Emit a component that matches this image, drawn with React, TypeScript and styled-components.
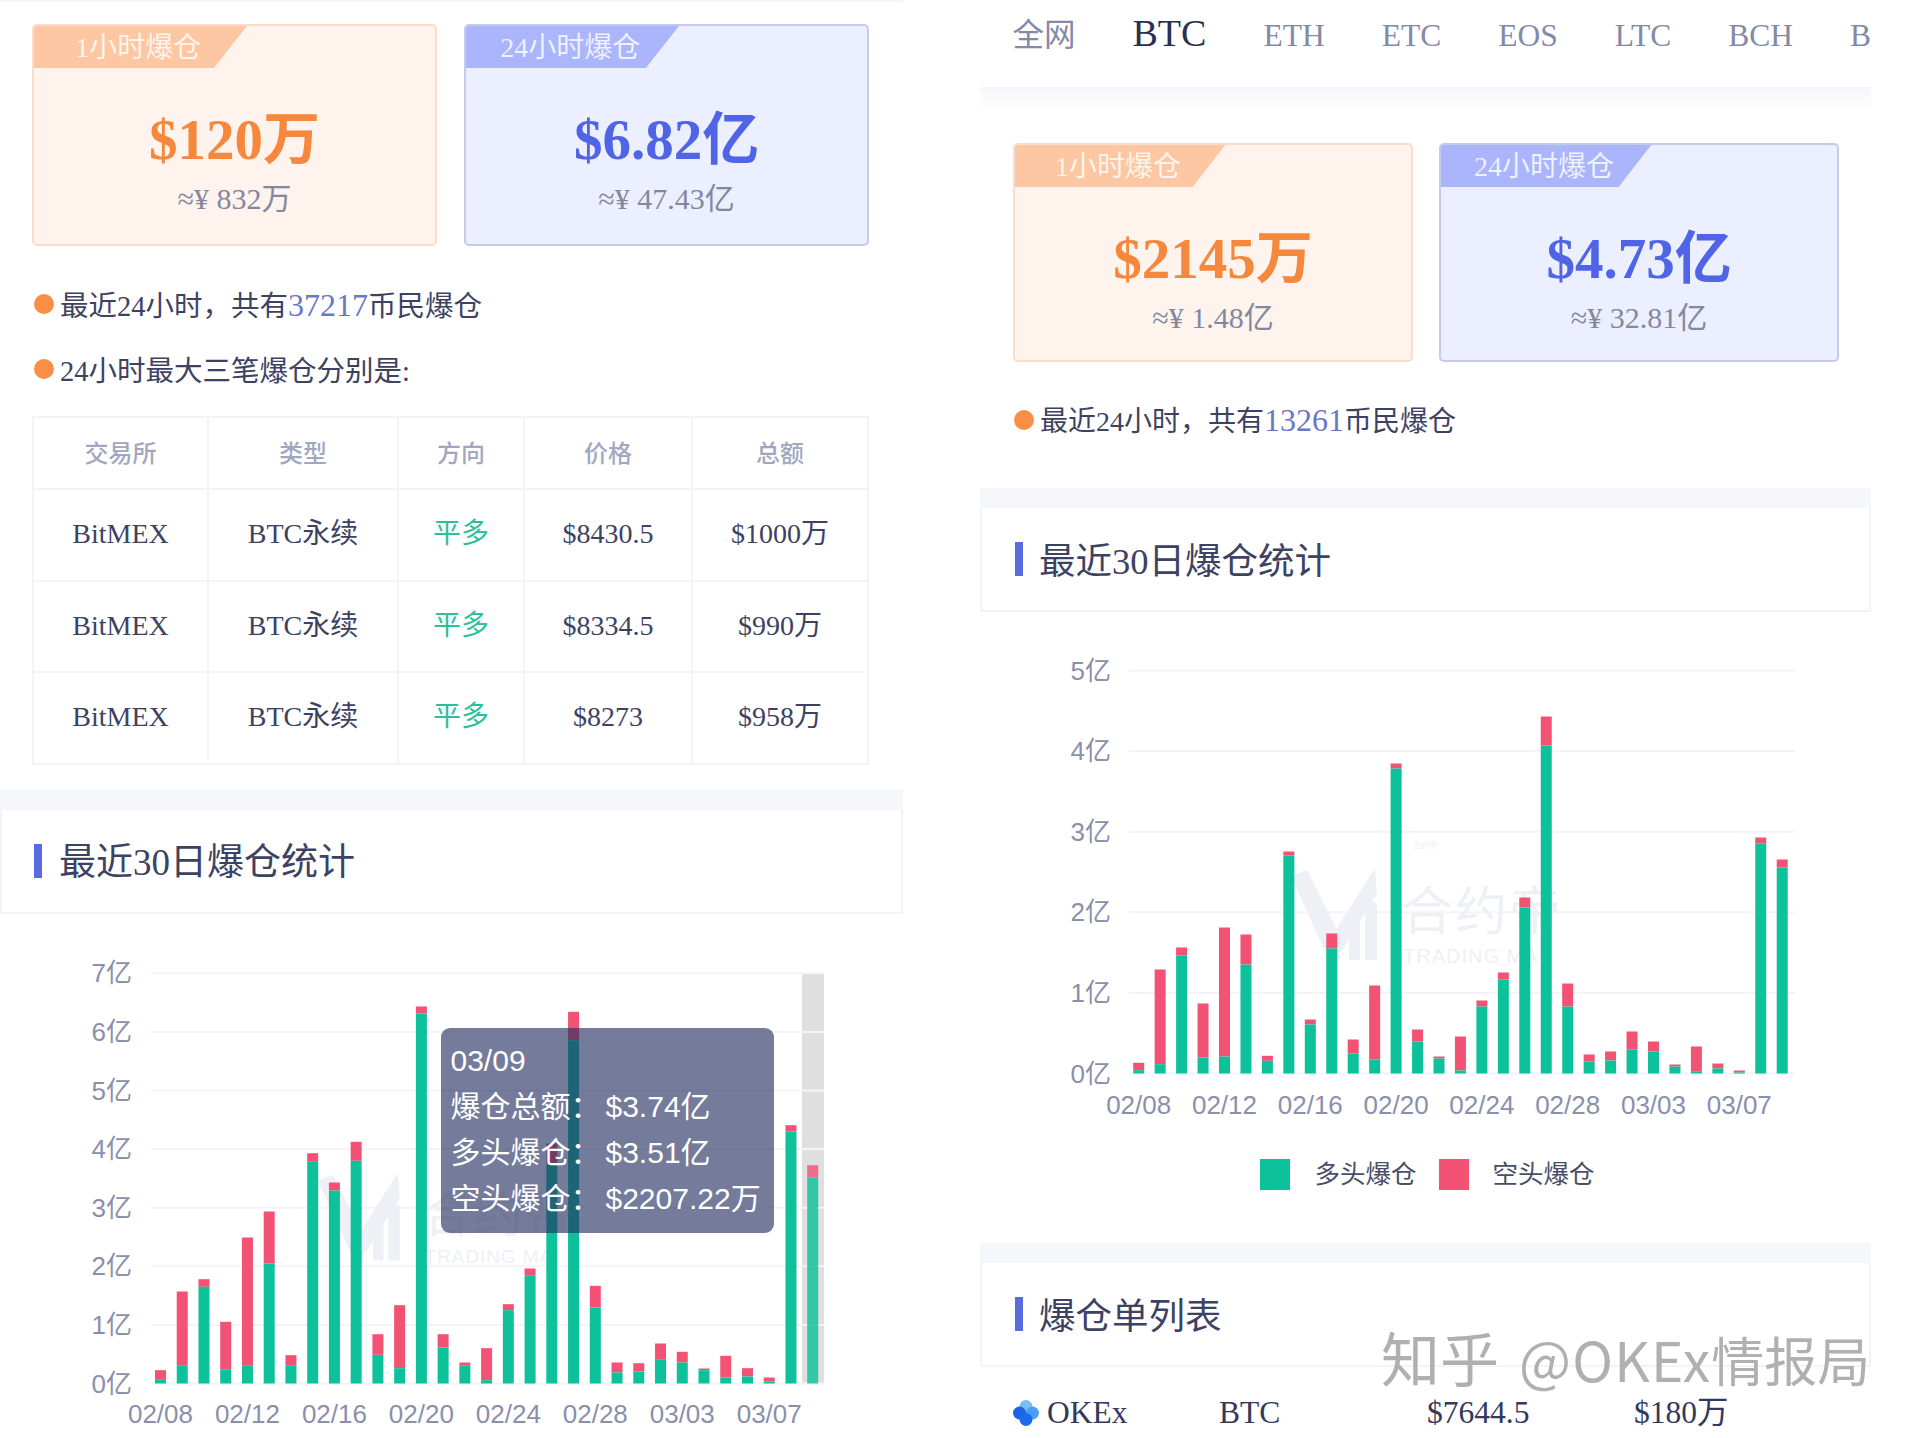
import React from "react";
import styled, { createGlobalStyle } from "styled-components";

const SERIF = `"Liberation Serif", "Noto Sans CJK SC", serif`;
const SANS = `"Liberation Sans", "Noto Sans CJK SC", sans-serif`;

const Global = createGlobalStyle`
  html, body { margin: 0; padding: 0; background: #fff; width: 1920px; height: 1438px; overflow: hidden; }
  * { box-sizing: border-box; }
`;

const Page = styled.div`
  position: relative;
  display: flex;
  width: 1920px;
  height: 1438px;
  overflow: hidden;
  background: #fff;
  font-family: ${SERIF};
  color: #3d4263;
`;
const LeftColumn = styled.div`
  width: 903px;
  flex: none;
`;
const RightColumn = styled.div`
  width: 891px;
  margin-left: 77px;
  flex: none;
`;
const TopStrip = styled.div`
  height: 2px;
  background: #f5f6fa;
`;
const Tabs = styled.nav`
  display: flex;
  align-items: center;
  gap: 57px;
  height: 87px;
  padding: 0 0 16px 32.5px;
  white-space: nowrap;
`;
const Tab = styled.span<{ $active?: boolean }>`
  flex: none;
  font-size: ${(p) => (p.$active ? "38px" : "31.5px")};
  line-height: 44px;
  color: ${(p) => (p.$active ? "#2a3050" : "#8389a9")};
  ${(p) => (p.$active ? "margin-top: -5px;" : "")}
`;
const FadeBar = styled.div`
  height: 23px;
  background: linear-gradient(#f5f6fa, #ffffff);
`;
const CardRow = styled.div<{ $top: number; $left: number; $gap: number }>`
  display: flex;
  gap: ${(p) => p.$gap}px;
  margin-top: ${(p) => p.$top}px;
  padding-left: ${(p) => p.$left}px;
`;
const Card = styled.div<{ $tone: "orange" | "blue"; $w: number; $h: number }>`
  position: relative;
  width: ${(p) => p.$w}px;
  height: ${(p) => p.$h}px;
  padding-top: 82px;
  text-align: center;
  border-radius: 5px;
  border: 2px solid ${(p) => (p.$tone === "orange" ? "#fadccb" : "#c5caeb")};
  background: ${(p) => (p.$tone === "orange" ? "#fef3ed" : "#ecefff")};
  overflow: hidden;
`;
const CardTag = styled.div<{ $tone: "orange" | "blue" }>`
  position: absolute;
  left: -2px;
  top: -2px;
  width: 54%;
  height: 44px;
  padding: 3px 4px 0 0;
  line-height: 41px;
  font-size: 28px;
  text-align: center;
  color: rgba(255, 255, 255, 0.82);
  background: ${(p) => (p.$tone === "orange" ? "#fdc7a4" : "#abb5fc")};
  clip-path: polygon(0 0, 100% 0, 84% 100%, 0 100%);
`;
const CardValue = styled.div<{ $tone: "orange" | "blue" }>`
  font-size: 57px;
  line-height: 64px;
  font-weight: 700;
  color: ${(p) => (p.$tone === "orange" ? "#f5883c" : "#5065e5")};
`;
const CardSub = styled.div`
  margin-top: 9px;
  font-size: 30px;
  line-height: 36px;
  color: #83889f;
`;
const BulletLine = styled.div<{ $top: number; $size: number }>`
  display: flex;
  align-items: center;
  gap: 6px;
  height: 40px;
  margin-top: ${(p) => p.$top}px;
  padding-left: 34px;
  font-size: ${(p) => p.$size}px;
  color: #3d4263;
`;
const BulletText = styled.span`
  margin-bottom: 2px;
`;
const Dot = styled.span`
  width: 20px;
  height: 20px;
  border-radius: 50%;
  background: #f98f47;
  flex: none;
`;
const Count = styled.span`
  font-size: 32px;
  color: #6a76c8;
`;
const DataTable = styled.table`
  width: 835px;
  margin: 27px 0 0 32px;
  border-collapse: collapse;
  table-layout: fixed;
`;
const HeadCell = styled.th`
  height: 72px;
  padding: 0 0 4px;
  border: 2px solid #f3f4f8;
  font-size: 24px;
  font-weight: 500;
  font-family: ${SANS};
  color: #a2a7c1;
  text-align: center;
`;
const BodyCell = styled.td<{ $green?: boolean }>`
  height: 91.5px;
  padding: 26px 0 0;
  vertical-align: baseline;
  border: 2px solid #f3f4f8;
  font-size: 28px;
  line-height: 36px;
  text-align: center;
  color: ${(p) => (p.$green ? "#2bbf9b" : "#3d4263")};
`;
const Band = styled.div<{ $top: number; $h: number }>`
  height: ${(p) => p.$h}px;
  margin-top: ${(p) => p.$top}px;
  background: #f6f7fb;
`;
const SectionHeader = styled.div<{ $left: number; $gap: number }>`
  display: flex;
  align-items: center;
  gap: ${(p) => p.$gap}px;
  height: 104px;
  padding-left: ${(p) => p.$left}px;
  border: solid #f2f3f7;
  border-width: 0 2px 2px 2px;
`;
const AccentBar = styled.span`
  width: 8px;
  height: 34px;
  background: #5a6ae0;
  flex: none;
`;
const SectionTitle = styled.h2<{ $size: number }>`
  margin: 0;
  padding-top: 5px;
  font-size: ${(p) => p.$size}px;
  line-height: 44px;
  font-weight: 400;
  color: #3d4263;
`;
const ChartBox = styled.div<{ $h: number }>`
  position: relative;
  height: ${(p) => p.$h}px;
`;
const ChartSvg = styled.svg`
  display: block;
  width: 100%;
  height: 100%;
`;
const AxisText = styled.text`
  font-family: ${SANS};
  font-size: 26px;
  fill: #8a8fac;
  dominant-baseline: central;
`;
const MarkText = styled.text<{ $size: number }>`
  font-family: ${SANS};
  font-size: ${(p) => p.$size}px;
  fill: #eef0f6;
  dominant-baseline: central;
`;
const Tooltip = styled.div`
  position: absolute;
  left: 440.5px;
  top: 114.5px;
  width: 333px;
  height: 205px;
  padding: 9.5px 10px;
  border-radius: 9px;
  background: rgba(39, 48, 97, 0.64);
  font-family: ${SANS};
  font-size: 30px;
  line-height: 46px;
  color: #fff;
  white-space: nowrap;
`;
const TipRow = styled.div`
  display: flex;
`;
const TipLabel = styled.span`
  width: 155px;
  flex: none;
`;
const Legend = styled.div`
  display: flex;
  justify-content: center;
  gap: 22px;
  padding-left: 4px;
`;
const LegendItem = styled.div`
  display: flex;
  align-items: center;
  gap: 24px;
  font-family: ${SANS};
  font-size: 25.5px;
  line-height: 31px;
  color: #4a4e68;
`;
const LegendSwatch = styled.span<{ $color: string }>`
  width: 30px;
  height: 31px;
  background: ${(p) => p.$color};
`;
const ListRow = styled.div`
  display: grid;
  grid-template-columns: 206px 208px 207px 1fr;
  align-items: baseline;
  height: 94px;
  padding: 26px 0 0 33px;
  font-size: 31.5px;
  line-height: 40px;
  color: #33395c;
`;
const Exchange = styled.span`
  display: flex;
  align-items: baseline;
  gap: 8px;
`;
const OkexGlyph = styled.svg`
  align-self: center;
  flex: none;
`;
const ZhihuMark = styled.div`
  position: absolute;
  left: 1381px;
  top: 1320px;
  font-family: "Noto Sans CJK SC", "Noto Sans", sans-serif;
  font-size: 59px;
  line-height: 74px;
  white-space: nowrap;
  color: #b0b0b0;
  text-shadow: 1px 1px 1px rgba(255, 255, 255, 0.9);
`;
const ZhihuHandle = styled.span`
  font-size: 55px;
  letter-spacing: 1.2px;
  margin-left: 20px;
`;
const ZhihuBureau = styled.span`
  font-size: 53px;
  letter-spacing: 0;
`;

type Bar = [number, number];

const leftBars: Bar[] = [
  [13.3, 4.3], [92, 18.3], [104.3, 96.7], [61.7, 14.3], [146, 17.7], [172, 120], [28.3, 18.3], [230.3, 221.7],
  [201, 193], [241.7, 222.7], [49.3, 28.7], [78.3, 15.3], [377, 370], [49.3, 36], [21, 17.7], [35.3, 3.3],
  [79.3, 73.3], [115, 107.7], [240, 219], [371.7, 343.3], [97.7, 76], [21, 11], [20.3, 12], [40, 24.3],
  [31.7, 21], [15, 13.3], [27.7, 6], [15.3, 7], [6, 2], [258.3, 252], [218.3, 206],
];
const rightBars: Bar[] = [
  [10.7, 3.3], [104, 9.3], [126, 118], [70, 16], [146, 17], [139, 109], [17.7, 12.7], [222, 218],
  [54, 49], [140, 125], [34, 20], [88, 14], [310, 305], [44, 32], [17, 15], [37, 3],
  [73, 67], [101, 94], [176, 166], [357, 328], [90, 67], [19, 12], [22, 13], [42, 24],
  [32, 22], [9, 7], [27, 2.3], [10, 5], [3, 1], [236, 230], [214, 206],
];
const dates = ["02/08", "02/12", "02/16", "02/20", "02/24", "02/28", "03/03", "03/07"];

type MarkProps = { x: number; y: number; s: number; tinyLabel?: boolean };
const ChartWatermark = ({ x, y, s, tinyLabel }: MarkProps) => (
  <g transform={`translate(${x} ${y}) scale(${s})`}>
    <polygon fill="#eef0f6" points="0,8 16,2 52,74 46,92 38,92" />
    <polygon fill="#eef0f6" points="42,66 84,0 86,26 50,84" />
    <rect fill="#eef0f6" x="58" y="52" width="11" height="40" />
    <rect fill="#eef0f6" x="74" y="34" width="12" height="58" />
    <MarkText $size={52} x="110" y="44" letterSpacing="2">合约帝</MarkText>
    <MarkText $size={20} x="112" y="88" letterSpacing="1">TRADING MA</MarkText>
    {tinyLabel ? <MarkText $size={8} x="122" y="-23">合约帝</MarkText> : null}
  </g>
);

type ChartProps = {
  bars: Bar[];
  labels: string[];
  zero: number;
  step: number;
  gridFrom: number;
  gridTo: number;
  firstCenter: number;
  spacing: number;
  labelRight: number;
  datesY: number;
  highlight?: boolean;
  children?: React.ReactNode;
};

const BarChart = ({ bars, labels, zero, step, gridFrom, gridTo, firstCenter, spacing, labelRight, datesY, highlight, children }: ChartProps) => (
  <ChartSvg>
    {highlight ? (
      <rect x={gridTo - 22} y={zero - step * (labels.length - 1)} width={22} height={step * (labels.length - 1)} fill="#dfdfdf" />
    ) : null}
    {labels.map((l, i) => (
      <g key={l}>
        <line x1={gridFrom} x2={gridTo} y1={zero - i * step} y2={zero - i * step} stroke="#f3f4f8" strokeWidth={2} />
        <AxisText x={labelRight} y={zero - i * step} textAnchor="end">{l}</AxisText>
      </g>
    ))}
    {children}
    {bars.map(([total, long], i) => {
      const cx = firstCenter + i * spacing;
      const dim = highlight && i === bars.length - 1;
      return (
        <g key={i} opacity={dim ? 0.82 : 1}>
          <rect x={cx - 5.5} y={zero - total} width={11} height={total - long} fill="#f45274" />
          <rect x={cx - 5.5} y={zero - long} width={11} height={long} fill="#0dc19b" />
        </g>
      );
    })}
    {dates.map((d, i) => (
      <AxisText key={d} x={firstCenter + i * 4 * spacing} y={datesY} textAnchor="middle">{d}</AxisText>
    ))}
  </ChartSvg>
);

const OkexIcon = () => (
  <OkexGlyph width="26" height="26" viewBox="0 0 26 26">
    <circle cx="13" cy="6.5" r="6.5" fill="#7dbdf3" />
    <circle cx="19.5" cy="13" r="6.5" fill="#4b9ff2" />
    <circle cx="6.5" cy="13" r="6.5" fill="#1b63e2" />
    <circle cx="13" cy="19.5" r="6.5" fill="#1a6ce8" />
  </OkexGlyph>
);

const yiLabels = (n: number) => Array.from({ length: n }, (_, i) => `${i}亿`);

const topRows = [
  ["$8430.5", "$1000万"],
  ["$8334.5", "$990万"],
  ["$8273", "$958万"],
];

export default function App() {
  return (
    <Page>
      <Global />
      <LeftColumn>
        <TopStrip />
        <CardRow $top={22} $left={32} $gap={27}>
          <Card $tone="orange" $w={405} $h={222}>
            <CardTag $tone="orange">1小时爆仓</CardTag>
            <CardValue $tone="orange">$120万</CardValue>
            <CardSub>≈¥ 832万</CardSub>
          </Card>
          <Card $tone="blue" $w={405} $h={222}>
            <CardTag $tone="blue">24小时爆仓</CardTag>
            <CardValue $tone="blue">$6.82亿</CardValue>
            <CardSub>≈¥ 47.43亿</CardSub>
          </Card>
        </CardRow>
        <BulletLine $top={38} $size={28.5}><Dot /><BulletText>最近24小时，共有<Count>37217</Count>币民爆仓</BulletText></BulletLine>
        <BulletLine $top={25} $size={28.5}><Dot /><BulletText>24小时最大三笔爆仓分别是:</BulletText></BulletLine>
        <DataTable>
          <colgroup>
            <col width={175} /><col width={190} /><col width={126} /><col width={168} /><col width={176} />
          </colgroup>
          <thead>
            <tr>
              <HeadCell>交易所</HeadCell><HeadCell>类型</HeadCell><HeadCell>方向</HeadCell><HeadCell>价格</HeadCell><HeadCell>总额</HeadCell>
            </tr>
          </thead>
          <tbody>
            {topRows.map(([price, total]) => (
              <tr key={price}>
                <BodyCell>BitMEX</BodyCell>
                <BodyCell>BTC永续</BodyCell>
                <BodyCell $green>平多</BodyCell>
                <BodyCell>{price}</BodyCell>
                <BodyCell>{total}</BodyCell>
              </tr>
            ))}
          </tbody>
        </DataTable>
        <Band $top={24} $h={21} />
        <SectionHeader $left={32} $gap={17}>
          <AccentBar />
          <SectionTitle $size={37}>最近30日爆仓统计</SectionTitle>
        </SectionHeader>
        <ChartBox $h={527}>
          <BarChart
            bars={leftBars}
            labels={yiLabels(8)}
            zero={469.5}
            step={58.6}
            gridFrom={151}
            gridTo={824}
            firstCenter={160.5}
            spacing={21.74}
            labelRight={132}
            datesY={499.5}
            highlight
          >
            <ChartWatermark x={318} y={259} s={0.95} />
          </BarChart>
          <Tooltip>
            <div>03/09</div>
            <TipRow><TipLabel>爆仓总额：</TipLabel><span>$3.74亿</span></TipRow>
            <TipRow><TipLabel>多头爆仓：</TipLabel><span>$3.51亿</span></TipRow>
            <TipRow><TipLabel>空头爆仓：</TipLabel><span>$2207.22万</span></TipRow>
          </Tooltip>
        </ChartBox>
      </LeftColumn>

      <RightColumn>
        <Tabs>
          <Tab>全网</Tab>
          <Tab $active>BTC</Tab>
          <Tab>ETH</Tab>
          <Tab>ETC</Tab>
          <Tab>EOS</Tab>
          <Tab>LTC</Tab>
          <Tab>BCH</Tab>
          <Tab>B</Tab>
        </Tabs>
        <FadeBar />
        <CardRow $top={33} $left={33} $gap={26}>
          <Card $tone="orange" $w={400} $h={219}>
            <CardTag $tone="orange">1小时爆仓</CardTag>
            <CardValue $tone="orange">$2145万</CardValue>
            <CardSub>≈¥ 1.48亿</CardSub>
          </Card>
          <Card $tone="blue" $w={400} $h={219}>
            <CardTag $tone="blue">24小时爆仓</CardTag>
            <CardValue $tone="blue">$4.73亿</CardValue>
            <CardSub>≈¥ 32.81亿</CardSub>
          </Card>
        </CardRow>
        <BulletLine $top={38} $size={28}><Dot /><BulletText>最近24小时，共有<Count>13261</Count>币民爆仓</BulletText></BulletLine>
        <Band $top={48} $h={20} />
        <SectionHeader $left={33} $gap={16}>
          <AccentBar />
          <SectionTitle $size={36.5}>最近30日爆仓统计</SectionTitle>
        </SectionHeader>
        <ChartBox $h={547}>
          <BarChart
            bars={rightBars}
            labels={yiLabels(6)}
            zero={461.5}
            step={80.6}
            gridFrom={149}
            gridTo={815}
            firstCenter={158.7}
            spacing={21.45}
            labelRight={131}
            datesY={492.5}
          >
            <ChartWatermark x={311} y={256} s={1} tinyLabel />
          </BarChart>
        </ChartBox>
        <Legend>
          <LegendItem><LegendSwatch $color="#0dc19b" />多头爆仓</LegendItem>
          <LegendItem><LegendSwatch $color="#f45274" />空头爆仓</LegendItem>
        </Legend>
        <Band $top={53} $h={20} />
        <SectionHeader $left={33} $gap={16}>
          <AccentBar />
          <SectionTitle $size={36.5}>爆仓单列表</SectionTitle>
        </SectionHeader>
        <ListRow>
          <Exchange><OkexIcon />OKEx</Exchange>
          <span>BTC</span>
          <span>$7644.5</span>
          <span>$180万</span>
        </ListRow>
      </RightColumn>
      <ZhihuMark>知乎<ZhihuHandle>@OKEx<ZhihuBureau>情报局</ZhihuBureau></ZhihuHandle></ZhihuMark>
    </Page>
  );
}
